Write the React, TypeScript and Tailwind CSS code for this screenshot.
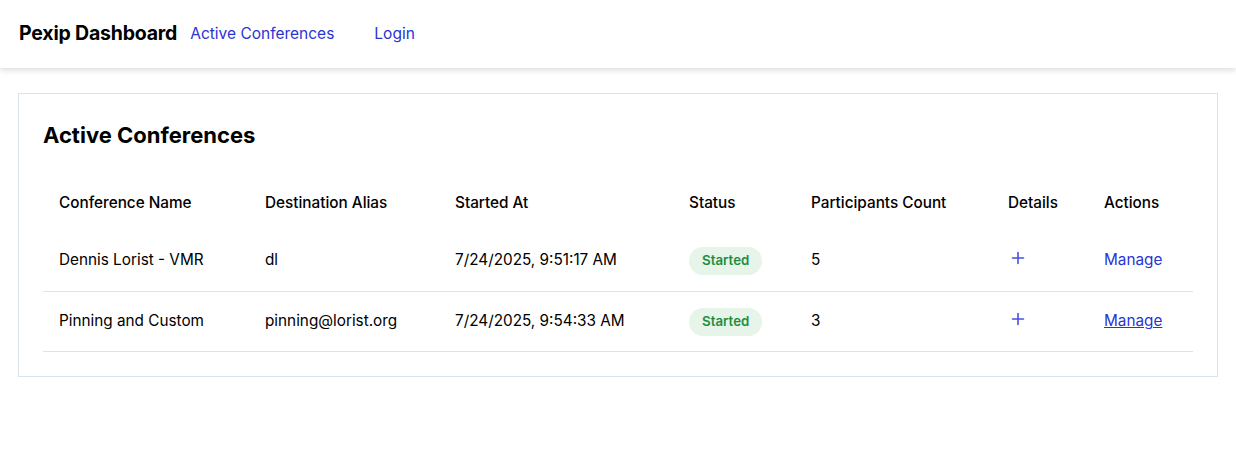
import React from "react";

const rows = [
  { name: "Dennis Lorist - VMR", alias: "dl", started: "7/24/2025, 9:51:17 AM", count: 5, underline: false },
  { name: "Pinning and Custom", alias: "pinning@lorist.org", started: "7/24/2025, 9:54:33 AM", count: 3, underline: true },
];

export default function App() {
  return (
    <div className="min-h-[468px] bg-white text-black" style={{ fontFamily: "Inter, 'Liberation Sans', sans-serif" }}>
      <header className="flex items-center h-[68px] px-[19px] shadow-[0_2px_6px_rgba(0,0,0,0.15)]">
        <span className="text-[19.5px] font-bold tracking-[-0.2px]">Pexip Dashboard</span>
        <nav className="flex items-center ml-[13px] text-[15.5px] text-[#2a33d4]">
          <a className="mr-[40px]">Active Conferences</a>
          <a>Login</a>
        </nav>
      </header>
      <main className="px-[18px] pt-[25px]">
        <section className="border border-[#dbe4ee] px-[24px] pt-[26px] pb-[24px]">
          <h2 className="text-[22px] font-bold leading-[30px] mb-[26px]">Active Conferences</h2>
          <table className="w-full text-[15.3px] border-collapse">
            <thead>
              <tr className="text-left">
                <th className="font-medium px-4 py-4 w-[206px]">Conference Name</th>
                <th className="font-medium px-4 py-4 w-[190px]">Destination Alias</th>
                <th className="font-medium px-4 py-4 w-[234px]">Started At</th>
                <th className="font-medium px-4 py-4 w-[122px]">Status</th>
                <th className="font-medium px-4 py-4 w-[197px]">Participants Count</th>
                <th className="font-medium px-4 py-4 w-[96px]">Details</th>
                <th className="font-medium px-4 py-4">Actions</th>
              </tr>
            </thead>
            <tbody>
              {rows.map((r) => (
                <tr key={r.name} className="border-b border-[#dbe4ee] h-[60.5px]">
                  <td className="px-4">{r.name}</td>
                  <td className="px-4">{r.alias}</td>
                  <td className="px-4">{r.started}</td>
                  <td className="px-4">
                    <span className="inline-block rounded-full bg-[#e6f4ea] text-[#1e8e3e] text-[13.3px] font-semibold px-[13px] py-[4px]">Started</span>
                  </td>
                  <td className="px-4">{r.count}</td>
                  <td className="px-4">
                    <svg width="14" height="14" viewBox="0 0 14 14" className="ml-[3px] mb-[6px] text-[#4a50dc]" stroke="currentColor" strokeWidth="1.6" strokeLinecap="round">
                      <path d="M7 1.5v11M1.5 7h11" />
                    </svg>
                  </td>
                  <td className="px-4">
                    <a className={`text-[#2a33d4] ${r.underline ? "underline" : ""}`}>Manage</a>
                  </td>
                </tr>
              ))}
            </tbody>
          </table>
        </section>
      </main>
    </div>
  );
}
